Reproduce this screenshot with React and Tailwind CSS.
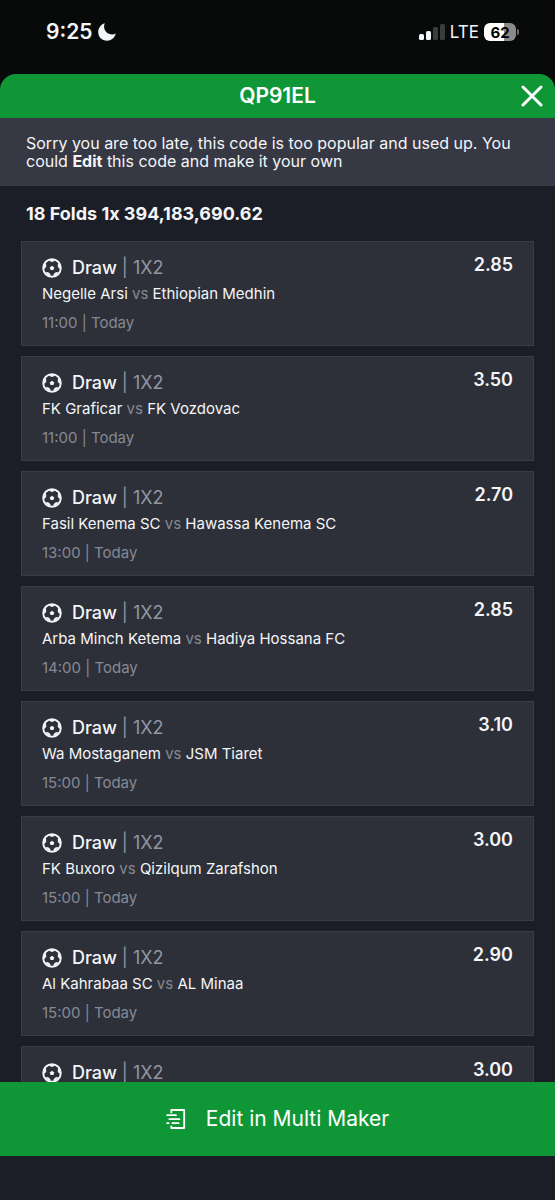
import React from "react";

const selections = [
  { home: "Negelle Arsi", away: "Ethiopian Medhin", time: "11:00", odds: "2.85" },
  { home: "FK Graficar", away: "FK Vozdovac", time: "11:00", odds: "3.50" },
  { home: "Fasil Kenema SC", away: "Hawassa Kenema SC", time: "13:00", odds: "2.70" },
  { home: "Arba Minch Ketema", away: "Hadiya Hossana FC", time: "14:00", odds: "2.85" },
  { home: "Wa Mostaganem", away: "JSM Tiaret", time: "15:00", odds: "3.10" },
  { home: "FK Buxoro", away: "Qizilqum Zarafshon", time: "15:00", odds: "3.00" },
  { home: "Al Kahrabaa SC", away: "AL Minaa", time: "15:00", odds: "2.90" },
  { home: "", away: "", time: "", odds: "3.00" },
];

const MoonIcon = () => (
  <svg viewBox="0 0 18 18" className="w-[18px] h-[18px]" fill="currentColor" aria-hidden="true">
    <path d="M6.800.2C6.300 1.300 6.100 2.300 6.100 3.600c0 4.700 3.700 7.900 8 7.900 1.400 0 2.600-.3 3.700-.9C16.700 14.900 13.200 17.800 9 17.800 4 17.800.2 14 .2 9.100.2 5 2.800 1.500 6.800.2z" />
  </svg>
);

const SignalIcon = () => (
  <svg viewBox="0 0 26 18" className="w-[26px] h-[18px]" fill="currentColor" aria-hidden="true">
    <rect x="0" y="11" width="5" height="6" rx="1.500" />
    <rect x="7" y="8" width="5" height="9" rx="1.500" />
    <rect x="14" y="4" width="5" height="13" rx="1.500" opacity="0.22" />
    <rect x="21" y="1" width="5" height="16" rx="1.500" opacity="0.22" />
  </svg>
);

const BallIcon = () => (
  <svg viewBox="0 0 20 20" className="w-5 h-5 shrink-0" fill="currentColor" aria-hidden="true">
    <circle cx="10" cy="10" r="8.800" fill="none" stroke="currentColor" strokeWidth="1.900" />
    <path d="M10 7.700l2.300 1.700-.9 2.700H8.600l-.9-2.700z" />
    <path d="M6.800 1.500h6.400L12 3.300l-2 .7-2-.7z" />
    <path d="M16.700 4.800l2.500 6.200-2.100-.5-1.300-1.700.1-2.200z" />
    <path d="M3.300 4.800L.8 11l2.100-.5 1.300-1.700-.1-2.200z" />
    <path d="M16.800 14.800l-5.200 3.800v-2.200l1.300-1.700 2-.6z" />
    <path d="M3.200 14.800l5.200 3.800v-2.200l-1.300-1.700-2-.6z" />
  </svg>
);

const CloseIcon = () => (
  <svg viewBox="0 0 22 22" className="w-[22px] h-[22px]" fill="none" stroke="currentColor" strokeWidth="3" strokeLinecap="round" aria-hidden="true">
    <path d="M2 2l18 18M20 2L2 20" />
  </svg>
);

const SlipIcon = () => (
  <svg viewBox="0 0 20 20" className="w-5 h-5" fill="none" stroke="currentColor" strokeWidth="1.800" strokeLinejoin="round" strokeLinecap="round" aria-hidden="true">
    <path d="M5.300 3.400V1H18.200v18H5.300v-1.500" />
    <path d="M1.200 6.200h8.800M3.400 10.200h10M6.400 14.200h6.200M1.200 14.200h1.400" />
  </svg>
);

const StatusBar = () => (
  <div className="h-[74px] shrink-0 pl-[46px] pr-9 pb-[10px] flex items-center justify-between">
    <div className="flex items-center gap-[6px]">
      <span className="text-[21px] leading-6 font-semibold">9:25</span>
      <MoonIcon />
    </div>
    <div className="flex items-center gap-[5px]">
      <SignalIcon />
      <span className="text-[17px] leading-6">LTE</span>
      <div className="flex items-center gap-px">
        <span className="w-8 h-[18px] rounded-md flex items-center justify-center text-black text-[15px] leading-none font-bold bg-linear-to-r from-white from-62% to-[#8a8a8a] to-62%">
          62
        </span>
        <span className="w-[2px] h-[6px] rounded-r-full bg-[#6f6f6f]" />
      </div>
    </div>
  </div>
);

const SelectionCard = ({ selection }) => (
  <li className="h-[105px] shrink-0 flex justify-between border border-[#383c47] bg-[#2d3038] px-5 pt-[14px]">
    <div>
      <div className="flex items-center gap-[10px]">
        <BallIcon />
        <p className="text-lg leading-6 font-medium">
          Draw <span className="font-normal text-[#9296a2]">| 1X2</span>
        </p>
      </div>
      {selection.home && (
        <>
          <p className="mt-1 text-[15px] leading-5">
            {selection.home} <span className="text-[#858995]">vs</span> {selection.away}
          </p>
          <p className="mt-[9px] text-[15px] leading-5 text-[#858995]">{selection.time} | Today</p>
        </>
      )}
    </div>
    <span className="text-lg leading-[18px] font-semibold">{selection.odds}</span>
  </li>
);

const App = () => {
  return (
    <div className="h-dvh flex flex-col bg-[#070a09] text-[#f4f5f8] font-['Inter','Liberation_Sans',sans-serif]">
      <StatusBar />
      <main className="flex-1 min-h-0 flex flex-col rounded-t-2xl overflow-hidden bg-[#1b1e26]">
        <header className="h-11 shrink-0 bg-[#0f9737] px-3 flex items-center justify-between text-white">
          <span className="w-[22px]" />
          <h1 className="text-[21px] leading-6 font-semibold">QP91EL</h1>
          <button type="button" aria-label="Close" className="cursor-pointer">
            <CloseIcon />
          </button>
        </header>
        <div className="bg-[#363944] shrink-0 pl-[26px] pr-8 py-4">
          <p className="text-base leading-[18px]">
            Sorry you are too late, this code is too popular and used up. You could{" "}
            <strong className="font-bold">Edit</strong> this code and make it your own
          </p>
        </div>
        <section className="flex-1 min-h-0 overflow-y-auto [scrollbar-width:none] px-[21px]">
          <h2 className="pl-[5px] pt-4 pb-[15px] text-lg leading-6 font-bold [font-variant-ligatures:no-contextual]">
            18 Folds 1x 394,183,690.62
          </h2>
          <ul className="flex flex-col gap-[10px]">
            {selections.map((selection, index) => (
              <SelectionCard key={index} selection={selection} />
            ))}
          </ul>
        </section>
        <footer className="shrink-0 pb-11">
          <button
            type="button"
            className="w-full h-[74px] bg-[#0f9737] text-white flex items-center justify-center gap-5 text-[21px] leading-7 cursor-pointer"
          >
            <SlipIcon />
            <span>Edit in Multi Maker</span>
          </button>
        </footer>
      </main>
    </div>
  );
};

export default App;
